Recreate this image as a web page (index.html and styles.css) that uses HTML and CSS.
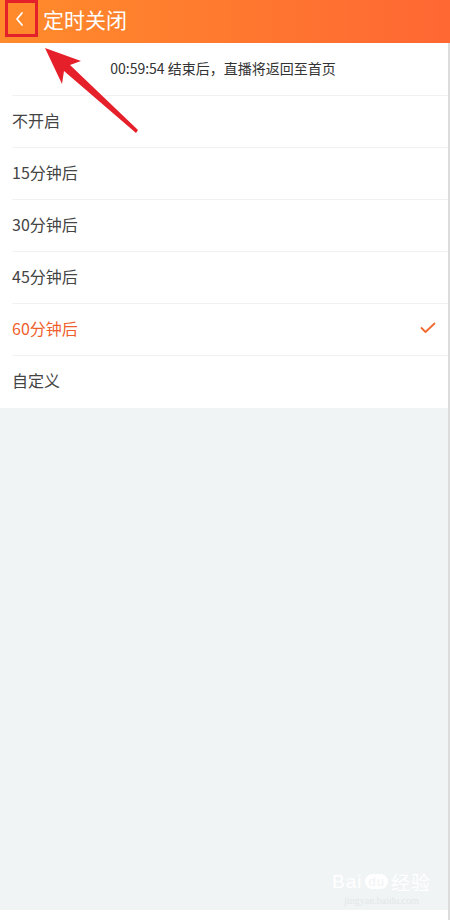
FILE: index.html
```html
<!DOCTYPE html>
<html lang="zh-CN">
    <head>
        <meta charset="utf-8" />
        <title>定时关闭</title>
        <link rel="stylesheet" href="styles.css">
    </head>
    <body>
        <div id="page">
            <div id="header">
                <div class="back">
                    <svg width="12" height="16" viewBox="0 0 12 16"><path d="M8 2 L3 8 L8 14" fill="none" stroke="#fff" stroke-width="1.8" stroke-linecap="round" stroke-linejoin="round"/></svg>
                </div>
                <div class="title">定时关闭</div>
            </div>
            <div id="content">
                <div class="list">
                    <div class="notice">00:59:54 结束后，直播将返回至首页</div>
                    <div class="item">不开启</div>
                    <div class="item">15分钟后</div>
                    <div class="item">30分钟后</div>
                    <div class="item">45分钟后</div>
                    <div class="item active">
                        <span>60分钟后</span>
                        <svg width="16" height="12" viewBox="0 0 16 12"><path d="M1.5 6 L5.5 10 L14.5 1.5" fill="none" stroke="#f06a30" stroke-width="1.8" stroke-linecap="round" stroke-linejoin="round"/></svg>
                    </div>
                    <div class="item last">自定义</div>
                </div>
                <div class="fill"></div>
            </div>
            <div id="bottom"></div>

            <!-- screenshot annotations -->
            <div class="mark-box"></div>
            <svg class="mark-arrow" width="150" height="140" viewBox="0 0 150 140">
                <polygon points="45,48 81,61 70,65 138,130 136,133 64,71 62,84" fill="#e6202a"/>
            </svg>
            <div class="watermark">
                <div class="wm-logo"><span>Bai</span><span class="paw">du</span><span>经验</span></div>
                <div class="wm-url">jingyan.baidu.com</div>
            </div>
        </div>
    </body>
</html>
```
FILE: styles.css
```css
body {
    margin: 0;
    font-family: "Noto Sans CJK SC", "Noto Sans", sans-serif;
}
#page {
    position: relative;
    width: 450px;
    height: 920px;
    display: flex;
    flex-direction: column;
    overflow: hidden;
}
#header {
    height: 43px;
    display: flex;
    align-items: center;
    background: linear-gradient(to right, #ff8b2b, #ff6733);
    color: #fff;
    flex-shrink: 0;
}
.back {
    width: 43px;
    display: flex;
    justify-content: center;
    padding-right: 4px;
    box-sizing: border-box;
    margin-top: -6px;
}
.title {
    font-size: 21px;
    margin-top: -5px;
}
#content {
    flex: 1;
    display: flex;
    flex-direction: column;
    border-right: 2px solid #dcdcdc;
}
.list {
    background-color: #fff;
}
.notice {
    height: 53px;
    display: flex;
    align-items: center;
    justify-content: center;
    font-size: 14px;
    color: #333;
    margin-left: 12px;
    padding-right: 14px;
    padding-bottom: 2px;
    box-sizing: border-box;
    border-bottom: 1px solid #f1f1f1;
}
.item {
    height: 51px;
    display: flex;
    align-items: center;
    justify-content: space-between;
    margin-left: 12px;
    padding-right: 12px;
    padding-bottom: 4px;
    box-sizing: content-box;
    font-size: 16px;
    color: #444;
    border-bottom: 1px solid #f1f1f1;
}
.item {
    height: 47px;
}
.item.last {
    border-bottom: none;
    height: 48px;
}
.item.active {
    color: #ef5f2c;
}
.fill {
    flex: 1;
    background-color: #f0f4f5;
}
#bottom {
    height: 10px;
    background-color: #fff;
    border-right: 2px solid #dcdcdc;
}
.mark-box {
    position: absolute;
    left: 5px;
    top: 0;
    width: 27px;
    height: 31px;
    border: 3px solid #e4202a;
}
.mark-arrow {
    position: absolute;
    left: 0;
    top: 0;
}
.watermark {
    position: absolute;
    left: 332px;
    top: 868px;
    color: #fff;
    text-align: center;
}
.wm-logo {
    font-family: "Liberation Sans", sans-serif;
    font-size: 19px;
    letter-spacing: 1px;
    display: flex;
    gap: 3px;
    align-items: center;
}
.paw {
    font-size: 13px;
    background-color: #fff;
    color: #f0f4f5;
    border-radius: 8px;
    padding: 0 3px;
}
.wm-url {
    font-family: "Liberation Serif", serif;
    font-size: 10px;
    color: #e3e7e8;
}
```
